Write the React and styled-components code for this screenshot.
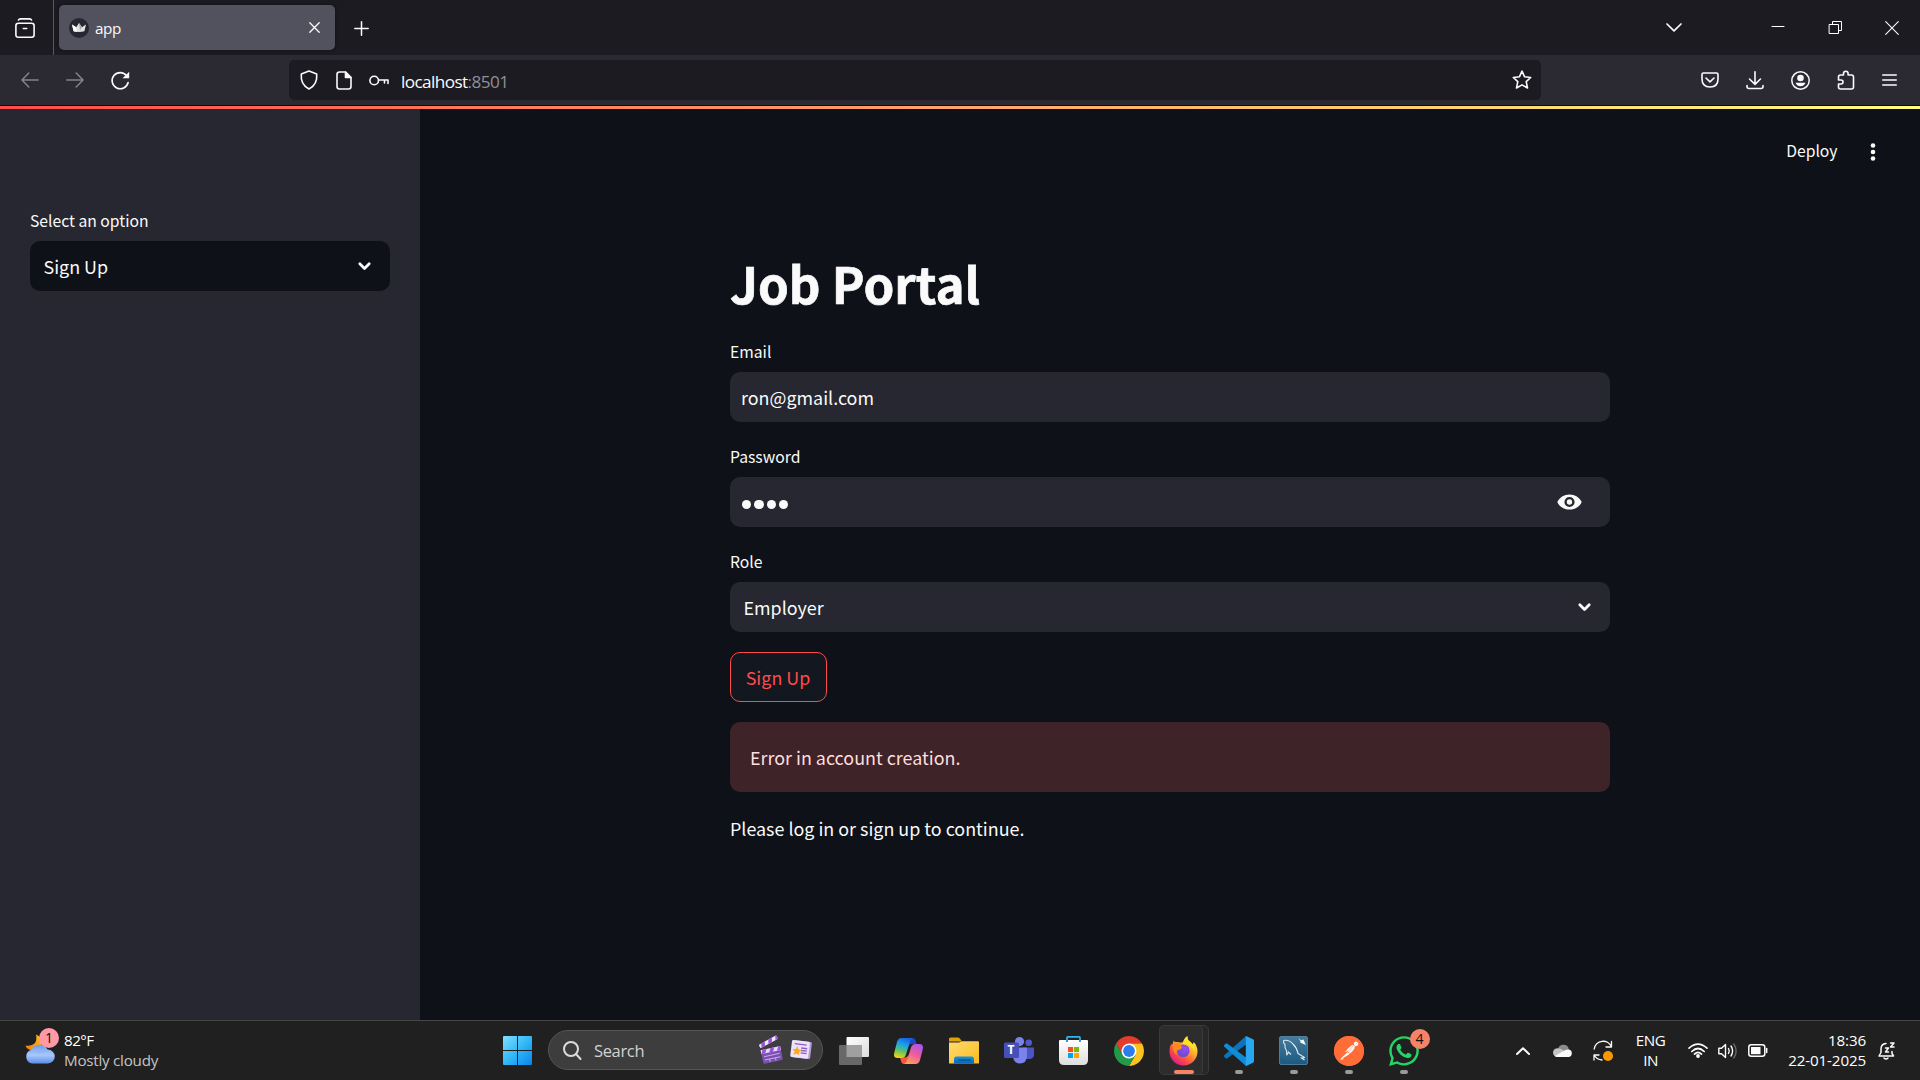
import React from "react";
import styled, { createGlobalStyle } from "styled-components";
import { SiPostman } from "react-icons/si";
import { FaWhatsapp } from "react-icons/fa";

const sans = '"Noto Sans CJK SC", "Noto Sans", sans-serif';
const system = '"Open Sans", "Noto Sans", sans-serif';

const GlobalStyle = createGlobalStyle`
  * { box-sizing: border-box; }
  body { margin: 0; background: #0e1117; overflow: hidden; }
  svg { display: block; flex: none; overflow: visible; }
`;

const Screen = styled.div`
  width: 1920px;
  height: 1080px;
  display: flex;
  flex-direction: column;
  overflow: hidden;
  color: #fafafa;
  font-family: ${sans};
`;

/* ---------- browser chrome ---------- */

const TabStrip = styled.div`
  height: 55px;
  flex: none;
  display: flex;
  align-items: flex-start;
  background: #1c1b22;
  font-family: ${system};
`;

const FirefoxView = styled.div`
  width: 54px;
  height: 55px;
  padding: 18px 0 0 15px;
  border-right: 1px solid #5a5960;
`;

const Tab = styled.div`
  width: 276px;
  height: 45px;
  margin: 5px 0 0 5px;
  padding: 0 15px 0 10px;
  display: flex;
  align-items: center;
  border-radius: 5px;
  background: #52525e;
  box-shadow: 0 0 4px rgba(0, 0, 0, 0.4);
`;

const TabTitle = styled.span`
  flex: 1;
  margin-left: 6px;
  padding-top: 1px;
  font-size: 15.3px;
  line-height: 20px;
  letter-spacing: -0.4px;
  color: #fbfbfe;
`;

const NewTab = styled.div`
  padding: 21px 0 0 19px;
`;

const WindowControls = styled.div`
  margin-left: auto;
  height: 55px;
  display: flex;
  align-items: center;
  padding-right: 21px;
`;

const ControlGap = styled.div`
  width: ${(p) => p.$w}px;
  flex: none;
`;

const Toolbar = styled.div`
  height: 50px;
  flex: none;
  display: flex;
  align-items: center;
  background: #2b2a33;
  font-family: ${system};
`;

const NavButtons = styled.div`
  width: 289px;
  padding-left: 21px;
  display: flex;
  align-items: center;
  gap: 27px;
`;

const UrlBar = styled.div`
  width: 1252px;
  height: 40px;
  padding: 0 9px 0 11px;
  display: flex;
  align-items: center;
  border-radius: 5px;
  background: #1c1b22;
`;

const UrlText = styled.div`
  flex: 1;
  margin-left: 12px;
  padding-top: 3px;
  font-size: 17.2px;
  line-height: 24px;
  letter-spacing: -0.6px;
  color: #fbfbfe;
`;

const Port = styled.span`
  color: #8f8f98;
`;

const ToolbarActions = styled.div`
  flex: 1;
  padding-left: 160px;
  display: flex;
  align-items: center;
  gap: 27px;
`;

const Decoration = styled.div`
  height: 4px;
  flex: none;
  border-top: 1px solid #0c0c0d;
  background: linear-gradient(90deg, #ff4b4b, #fffd80) padding-box;
`;

/* ---------- page ---------- */

const Page = styled.div`
  height: 911px;
  flex: none;
  display: flex;
`;

const Sidebar = styled.aside`
  width: 420px;
  padding: 97px 30px 0;
  background: #262730;
`;

const Main = styled.main`
  flex: 1;
  background: #0e1117;
`;

const AppHeader = styled.header`
  height: 85px;
  padding: 0 44.5px 0 0;
  display: flex;
  justify-content: flex-end;
  align-items: center;
`;

const DeployButton = styled.span`
  margin: -2px 32px 0 0;
  font-size: 15.7px;
  line-height: 24px;
`;

const Column = styled.div`
  width: 880px;
  margin: 0 auto;
  padding-top: 56px;
`;

const Title = styled.h1`
  margin: 0;
  height: 87px;
  font-size: 49.3px;
  line-height: 66px;
  font-weight: 700;
  -webkit-text-stroke: 0.7px #fafafa;
`;

const Field = styled.div`
  margin-bottom: 20px;
`;

const Label = styled.div`
  height: 35px;
  font-size: 15.7px;
  line-height: 30px;
`;

const Control = styled.div`
  height: 50px;
  padding: 0 ${(p) => p.$right || 18}px 0 ${(p) => p.$left || 13.5}px;
  display: flex;
  align-items: center;
  justify-content: space-between;
  border-radius: 10px;
  background: ${(p) => (p.$dark ? "#0e1117" : "#262730")};
  font-size: 17.9px;
  line-height: 30px;
`;

const Dots = styled.div`
  display: flex;
  gap: 3px;
  padding: 4.5px 0 0 1.3px;
`;

const Dot = styled.i`
  width: 9.2px;
  height: 9.2px;
  border-radius: 50%;
  background: #fafafa;
`;

const SubmitButton = styled.button`
  display: block;
  width: 97px;
  height: 50px;
  margin: 0 0 20px;
  padding: 0 1px 0 0;
  border: 1px solid #ff4b4b;
  border-radius: 10px;
  background: #131720;
  color: #ff4b4b;
  font: 17.9px/30px ${sans};
`;

const Alert = styled.div`
  height: 70px;
  margin-bottom: 20px;
  padding: 20px;
  border-radius: 10px;
  background: #3e2328;
  color: #ffdede;
  font-size: 17.9px;
  line-height: 30px;
`;

const Note = styled.p`
  margin: 0;
  padding-top: 1px;
  font-size: 17.9px;
  line-height: 30px;
`;

/* ---------- taskbar ---------- */

const Taskbar = styled.footer`
  height: 60px;
  flex: none;
  display: flex;
  border-top: 1px solid #454545;
  background: #202020;
  font-family: ${system};
`;

const Weather = styled.div`
  width: 490px;
  padding: 0 0 0 25px;
  display: flex;
  align-items: center;
`;

const WeatherIcon = styled.div`
  position: relative;
  width: 39px;
  height: 59px;
  padding-top: 13px;
`;

const Badge = styled.span`
  position: absolute;
  top: ${(p) => p.$top}px;
  left: ${(p) => p.$left}px;
  width: 20px;
  height: 20px;
  border-radius: 50%;
  background: ${(p) => p.$color};
  color: #101010;
  font-size: 14px;
  line-height: 20px;
  text-align: center;
`;

const Lines = styled.div`
  padding-bottom: 2px;
  font-size: 15.2px;
  line-height: 20px;
  text-align: ${(p) => p.$align || "left"};
  letter-spacing: ${(p) => p.$ls || -0.5}px;
  white-space: nowrap;
  color: #fff;
`;

const Muted = styled.div`
  color: #c4c4c4;
  letter-spacing: -0.25px;
`;

const Slot = styled.div`
  position: relative;
  width: ${(p) => p.$w || 55}px;
  height: 59px;
  display: flex;
  align-items: center;
  justify-content: center;
`;

const SearchBox = styled.div`
  width: 275px;
  height: 40px;
  margin: 9px 3px 0 3px;
  padding: 0 10px 0 14px;
  display: flex;
  align-items: center;
  border: 1px solid #555;
  border-radius: 20px;
  background: #3d3d3d;
`;

const SearchText = styled.span`
  flex: 1;
  margin-left: 13px;
  padding-top: 1px;
  font-size: 16.5px;
  letter-spacing: -0.35px;
  color: #d2d2d2;
`;

const Running = styled.i`
  position: absolute;
  bottom: 6px;
  left: ${(p) => (p.$active ? 17.5 : 23.5)}px;
  width: ${(p) => (p.$active ? 20 : 8)}px;
  height: 4px;
  border-radius: 2px;
  background: ${(p) => (p.$active ? "#f68368" : "#9a9a9a")};
`;

const ActiveTile = styled.div`
  position: absolute;
  top: 4px;
  left: ${(p) => (p.$back ? 8 : 2.5)}px;
  width: ${(p) => (p.$back ? 44.5 : 44)}px;
  height: 50px;
  border: 1px solid #3a3a3a;
  border-radius: 5px;
  background: ${(p) => (p.$back ? "#272727" : "#2d2d2d")};
`;

const IconLayer = styled.div`
  position: relative;
`;

const Tray = styled.div`
  margin-left: auto;
  padding-right: 25px;
  display: flex;
  align-items: center;
`;

const TrayGap = styled.div`
  width: ${(p) => p.$w}px;
`;

/* ---------- icons ---------- */

const Svg = ({ w = 20, h = w, vb, sw = 1.6, children, fill = "none", stroke = "#fbfbfe" }) => (
  <svg width={w} height={h} viewBox={vb || `0 0 ${w} ${h}`} fill={fill} stroke={stroke} strokeWidth={sw} strokeLinecap="round" strokeLinejoin="round">
    {children}
  </svg>
);

const ChevronDown = () => (
  <Svg w={13} h={9} sw={2.8} stroke="#fafafa"><path d="M1.800 1.800 6.500 6.500 11.200 1.800" /></Svg>
);

const Eye = () => (
  <svg width="25" height="16" viewBox="0 0 25 16">
    <path d="M.3 8C2.4 3.3 7 .4 12.5.4S22.600 3.300 24.700 8C22.600 12.700 18 15.600 12.500 15.600S2.400 12.700.3 8Z" fill="#fafafa" />
    <circle cx="12.500" cy="8" r="3.900" fill="#fafafa" stroke="#262730" strokeWidth="2.400" />
  </svg>
);

const Favicon = () => (
  <svg width="20" height="20" viewBox="0 0 20 20">
    <circle cx="10" cy="10" r="10" fill="#262730" />
    <path d="M3 6.500 7.200 9.200 10 5 12.900 9.200 17 6.500 15.400 13.200Q10 14.800 4.600 13.200Z" fill="#e2e2e2" />
    <path d="M3 6.500 7.200 9.200 7.900 13.900 4.600 13.200Z" fill="#fff" />
    <path d="M10 5 12.900 9.200 11 12.500Z" fill="#aaa" />
  </svg>
);

const WeatherGlyph = () => (
  <svg width="30" height="30" viewBox="0 0 30 30">
    <defs>
      <linearGradient id="moon" x1="1" y1="0" x2="0" y2="1"><stop stopColor="#fbc02d" /><stop offset="1" stopColor="#f57c00" /></linearGradient>
      <linearGradient id="cloud" x1="0" y1="0" x2="0" y2="1"><stop stopColor="#6d9df0" /><stop offset=".55" stopColor="#a9c8fb" /><stop offset="1" stopColor="#5b8de8" /></linearGradient>
    </defs>
    <path d="M11 .5C13 10 7 12.500.5 11.500 2 16 8 18 13 15.500S19 4 11 .5Z" fill="url(#moon)" />
    <path d="M7 29.500A7 7 0 0 1 6.600 15.800 9 9 0 0 1 22.500 15.500 7 7 0 0 1 23 29.500Z" fill="url(#cloud)" />
    <path d="M6 16.500Q11 15 14 20M22.500 16Q18 16.500 16.500 18.500" fill="none" stroke="#8cb4f7" />
  </svg>
);

const WindowsLogo = () => (
  <svg width="29" height="29" viewBox="0 0 29 29">
    <defs><linearGradient id="win" x1="0" y1="0" x2="29" y2="29" gradientUnits="userSpaceOnUse"><stop stopColor="#7fe0ff" /><stop offset=".5" stopColor="#33b8f7" /><stop offset="1" stopColor="#0a84e8" /></linearGradient></defs>
    <path d="M0 1Q0 0 1 0H14V14H0ZM15 0H28Q29 0 29 1V14H15ZM0 15H14V29H1Q0 29 0 28ZM15 15H29V28Q29 29 28 29H15Z" fill="url(#win)" />
  </svg>
);

const Clapper = () => (
  <svg width="26" height="28" viewBox="0 0 26 28">
    <g transform="rotate(-12 13 20)">
      <rect x="3" y="12" width="20" height="14" rx="1.500" fill="#7a4fae" />
      <path d="M3 12H23V16H3Z" fill="#e9d5ff" />
      <path d="M5 12H9L7 16H3ZM13 12H17L15 16H11ZM21 12H23V14L22 16H19Z" fill="#9b51d8" />
      <path d="M5 19H21M5 22.500H21M10 22.500V25.500M16 22.500V25.500" stroke="#c9a8ee" strokeWidth="1" />
    </g>
    <g transform="rotate(-29 2 11)">
      <rect x="1" y="8" width="20" height="4" rx="1" fill="#f1e4ff" />
      <path d="M4 8H8L6 12H2ZM12 8H16L14 12H10ZM20 8H21V12H18Z" fill="#9b51d8" />
    </g>
  </svg>
);

const News = () => (
  <svg width="22" height="20" viewBox="0 0 22 20">
    <g transform="rotate(7 11 10)">
      <rect x="3" y="1" width="18" height="17" rx="1.500" fill="#b79bd8" />
      <rect x="1" y="1" width="18" height="17" rx="1.500" fill="#ece2fa" />
      <path d="M4 4.500H16M11 8H17M11 10.500H17M11 13H17" stroke="#8a5fc0" strokeWidth="1.300" />
      <path d="M7 6.500 8.400 9.600 11.500 10 9.200 12.200 9.800 15.500 7 13.900 4.200 15.500 4.800 12.200 2.500 10 5.600 9.600Z" fill="#ffa726" />
    </g>
  </svg>
);

const TaskView = () => (
  <svg width="30" height="28" viewBox="0 0 30 28">
    <defs><linearGradient id="tv" x1="0" y1="0" x2="1" y2="1"><stop stopColor="#fff" /><stop offset="1" stopColor="#dcdcdc" /></linearGradient></defs>
    <rect x="7.500" width="22.500" height="20" rx="1" fill="url(#tv)" />
    <rect y="8" width="23" height="20" rx="1" fill="#686868" />
    <path d="M7.500 8H23V20H7.500Z" fill="#a0a0a0" />
  </svg>
);

const Copilot = () => (
  <svg width="29" height="26" viewBox="0 0 29 26">
    <defs>
      <linearGradient id="cpa" x1=".6" y1="0" x2=".3" y2="1"><stop stopColor="#1b63e0" /><stop offset=".35" stopColor="#1aa4e8" /><stop offset=".65" stopColor="#5cc26a" /><stop offset="1" stopColor="#f4d50c" /></linearGradient>
      <linearGradient id="cpb" x1=".8" y1="0" x2=".3" y2="1"><stop stopColor="#a855f0" /><stop offset=".5" stopColor="#ee5b9c" /><stop offset="1" stopColor="#ffa05a" /></linearGradient>
    </defs>
    <path d="M14 0H18.500Q21 0 21.800 3L22.500 6H18Q15 6 14 9Z" fill="#1b49c8" />
    <path d="M14.500 26H10Q7.500 26 7 23L6 19.500H10.500Q13.500 19.500 14.500 16Z" fill="#f25a3c" />
    <path d="M7.500 0H19Q16.500 1 15.500 5L12 16.500Q11 20 7.500 20H3Q-1 19.500.3 14.500L3 4Q4 0 7.500 0Z" fill="url(#cpa)" />
    <path d="M21.500 26H10Q12.500 25 13.500 21L17 9.500Q18 6 21.500 6H26Q30 6.500 28.700 11.500L26 22Q25 26 21.500 26Z" fill="url(#cpb)" />
  </svg>
);

const Explorer = () => (
  <svg width="30" height="27" viewBox="0 0 30 27">
    <defs>
      <linearGradient id="fld" x1="0" y1="0" x2="1" y2="1"><stop stopColor="#ffdc70" /><stop offset="1" stopColor="#fbbb1e" /></linearGradient>
      <linearGradient id="fldb" x1="0" y1="0" x2="0" y2="1"><stop stopColor="#1695e0" /><stop offset="1" stopColor="#0866b8" /></linearGradient>
    </defs>
    <path d="M0 2Q0 .5 1.500.5H8.500Q10 .5 11 1.700L13 4.500H0Z" fill="#e0a106" />
    <path d="M0 5.500H10L13 4.300H29Q30 4.300 30 5.500V26Q30 26.500 29.500 26.500H.5Q0 26.500 0 26Z" fill="url(#fld)" />
    <path d="M5 26.500V22Q5 19.500 7.500 19.500H22.500Q25 19.500 25 22V26.500Z" fill="url(#fldb)" />
    <rect x="9" y="22.500" width="13" height="1.200" fill="#064a8c" />
  </svg>
);

const TeamsBox = styled.div`
  position: relative;
  width: 30px;
  height: 27px;
`;

const TeamsT = styled.span`
  position: absolute;
  left: 0;
  top: 5px;
  width: 15px;
  text-align: center;
  font: 700 12px/16px ${system};
  color: #fff;
`;

const Teams = () => (
  <TeamsBox>
    <svg width="30" height="27" viewBox="0 0 30 27">
      <circle cx="24.700" cy="5.800" r="3.300" fill="#5059c9" />
      <path d="M19 10.500H29.500Q30 10.500 30 11.500V18Q29.500 22 25 22H21Z" fill="#4c55c5" />
      <circle cx="15.500" cy="4.600" r="4.600" fill="#7b83eb" />
      <path d="M9 10.500H22Q23 10.500 23 11.500V19Q22.500 26.500 16 26.500T9 19Z" fill="#7b83eb" />
      <rect y="5.500" width="15" height="15.500" rx="1.500" fill="#4750b8" />
    </svg>
    <TeamsT>T</TeamsT>
  </TeamsBox>
);

const Store = () => (
  <svg width="29" height="29" viewBox="0 0 29 29">
    <defs><linearGradient id="st" x1="0" y1="0" x2="0" y2="1"><stop stopColor="#fff" /><stop offset="1" stopColor="#dedede" /></linearGradient></defs>
    <path d="M8 6V1.500Q8 .8 8.700.8H20.300Q21 .8 21 1.500V6" fill="none" stroke="#2fb5ee" strokeWidth="1.700" />
    <path d="M0 5Q0 4 1 4H28Q29 4 29 5V24Q29 29 24 29H5Q0 29 0 24Z" fill="url(#st)" />
    <path d="M8 4V6M21 4V6" stroke="#1686c4" strokeWidth="1.700" />
    <path d="M9 11H14V16H9Z" fill="#f25022" /><path d="M15 11H20V16H15Z" fill="#7fba00" />
    <path d="M9 17H14V22H9Z" fill="#00a4ef" /><path d="M15 17H20V22H15Z" fill="#ffa800" />
  </svg>
);

const Chrome = () => (
  <svg width="30" height="30" viewBox="0 0 30 30">
    <path d="M2.010 7.500A15 15 0 0 1 27.990 7.500H15L8.500 18.750Z" fill="#e33b2e" />
    <path d="M27.990 7.500A15 15 0 0 1 15 30L21.500 18.750 15 7.500Z" fill="#fcc31e" />
    <path d="M15 30A15 15 0 0 1 2.010 7.500L8.500 18.750H21.500Z" fill="#249a49" />
    <circle cx="15" cy="15" r="7.500" fill="#fff" /><circle cx="15" cy="15" r="5.900" fill="#2b7cf0" />
  </svg>
);

const Firefox = () => (
  <svg width="29" height="29" viewBox="0 0 29 29">
    <defs>
      <linearGradient id="ff" x1=".85" y1=".1" x2=".2" y2=".95"><stop stopColor="#fff04a" /><stop offset=".35" stopColor="#ffb02e" /><stop offset=".65" stopColor="#ff5a3c" /><stop offset="1" stopColor="#e31587" /></linearGradient>
      <radialGradient id="ffp" cx=".65" cy=".25" r=".8"><stop stopColor="#a04bf0" /><stop offset="1" stopColor="#5b4fd0" /></radialGradient>
    </defs>
    <path d="M4.500 4.500Q5.500 6.200 7.500 6Q9.500 5.600 12 6.800Q13.500 5.500 14 6.500Q15.500 1.500 18.500.3Q18 3.500 21 5.500Q23 7.300 23.500 9L24.800 6Q28.500 10 28.500 15.500A14 14 0 0 1 .5 15.500Q.4 10.500 2.300 7.800Q2.600 9 3.200 9Z" fill="url(#ff)" />
    <path d="M14 6.500Q15.500 1.500 18.500.3Q18 3.500 21 5.500Q26 9.500 25.500 15Q23 9.500 14 8Z" fill="#ffe226" />
    <circle cx="14.300" cy="14.800" r="6.300" fill="url(#ffp)" />
    <path d="M3.500 8.500Q8 6 12.500 8.500 11.500 10.500 13 11.300 13 12.800 10.800 13.600 9.300 14.500 8 14.200 7 17 8.500 19 4 18 3.500 8.500Z" fill="#ff8a1e" />
  </svg>
);

const VSCode = () => (
  <svg width="30" height="30" viewBox="0 0 30 30">
    <path d="M0 19.500 22 0V8.500L3.500 22.300Q2.500 23 1.600 22.200L.3 21Q-.5 20.300 0 19.500Z" fill="#0b73bb" />
    <path d="M0 10.500 22 30V21.500L3.500 7.700Q2.500 7 1.600 7.800L.3 9Q-.5 9.700 0 10.500Z" fill="#128bd6" />
    <path d="M22 0 29 3.200Q30 3.700 30 5V25Q30 26.300 29 26.800L22 30Q21.400 29.800 21.800 28.500V1.500Q21.400.2 22 0Z" fill="#28a8f0" />
  </svg>
);

const MySql = () => (
  <svg width="29" height="29" viewBox="0 0 29 29">
    <defs><linearGradient id="my" x1="0" y1="0" x2="0" y2="1"><stop stopColor="#457b9d" /><stop offset="1" stopColor="#1d5a80" /></linearGradient></defs>
    <rect x=".5" y=".5" width="28" height="28" rx="1.500" fill="url(#my)" stroke="#5f95b8" strokeWidth=".7" />
    <path d="M4.500 4.500Q4 7 6 8.500Q5.500 12 7.500 14.500L7.800 19Q9 18.500 9.300 15.800L12 18.500M4.500 4.500Q10 3.500 14 8 18 12 19 17.500L25.500 21.500Q24 22.500 22 21.800L25.500 24" fill="none" stroke="#dceaf3" strokeWidth="1.100" strokeLinejoin="round" />
    <path d="M19.500 2 22 4.200 24.500 3.500 25.500 6 27 9 23.500 7.500 21.500 6.800 21.500 5.500Z" fill="#f3f8fb" />
  </svg>
);

const PostmanDisc = styled.div`
  width: 30px;
  height: 30px;
  border-radius: 50%;
  background: radial-gradient(circle, #fff 60%, #ff6c37 62%);
`;

const Star = () => (
  <Svg w={20}><path d="M10 1.200 12.600 6.800 18.700 7.500 14.200 11.700 15.500 18 10 14.900 4.500 18 5.800 11.700 1.300 7.500 7.400 6.800Z" /></Svg>
);

export default function App() {
  return (
    <Screen>
      <GlobalStyle />
      <TabStrip>
        <FirefoxView>
          <Svg w={20} h={21}>
            <path d="M3.500 2Q4 .9 5.500.9H14.500Q16 .9 16.500 2" />
            <rect x=".9" y="5.300" width="18.200" height="14" rx="2.500" />
            <path d="M8.300 10.500H11.700" />
          </Svg>
        </FirefoxView>
        <Tab>
          <Favicon />
          <TabTitle>app</TabTitle>
          <Svg w={11} sw={1.300}><path d="M.8.8 10.200 10.200M10.200.8.8 10.200" /></Svg>
        </Tab>
        <NewTab><Svg w={15} sw={1.500}><path d="M7.500.8V14.200M.8 7.500H14.200" /></Svg></NewTab>
        <WindowControls>
          <Svg w={16} h={9} sw={1.700}><path d="M1 1 8 7.800 15 1" /></Svg>
          <ControlGap $w={90} />
          <Svg w={12} h={3} sw={1}><path d="M0 .5H12" stroke="#fff" /></Svg>
          <ControlGap $w={45} />
          <Svg w={13} sw={1}><path d="M.5 3.500H9.500V12.500H.5ZM3.500 3.500V.5H12.500V9.500H9.500" stroke="#fff" strokeLinejoin="miter" /></Svg>
          <ControlGap $w={43} />
          <Svg w={14} sw={1.100}><path d="M.7.7 13.300 13.300M13.300.7.7 13.300" /></Svg>
        </WindowControls>
      </TabStrip>

      <Toolbar>
        <NavButtons>
          <Svg w={18} h={16} stroke="#84838b" sw={1.500}><path d="M17.200 8H1M7.800 1 1 8 7.800 15" /></Svg>
          <Svg w={18} h={16} stroke="#84838b" sw={1.500}><path d="M.8 8H17M10.200 1 17 8 10.200 15" /></Svg>
          <Svg w={19} h={19} sw={1.600}>
            <path d="M15.600 4.700A8.100 8.100 0 1 0 17.100 11.500" />
            <path d="M18.200.8V7.200H11.500Z" fill="#fbfbfe" stroke="none" />
          </Svg>
        </NavButtons>
        <UrlBar>
          <Svg w={18} h={20}><path d="M9 1 16.700 4Q17.700 14.500 9 19 .3 14.500 1.300 4Z" /></Svg>
          <ControlGap $w={18} />
          <Svg w={16} h={19}>
            <path d="M9.500 1H3.500Q1 1 1 3.500V15.500Q1 18 3.500 18H12.500Q15 18 15 15.500V6.500Z" />
            <path d="M9.500 1V6.500H15Z" fill="#fbfbfe" />
          </Svg>
          <ControlGap $w={17} />
          <Svg w={20} h={11}><circle cx="5.200" cy="5.500" r="4.300" /><path d="M9.600 5H19V8.500M15.500 5V8" /></Svg>
          <UrlText>localhost<Port>:8501</Port></UrlText>
          <Star />
        </UrlBar>
        <ToolbarActions>
          <Svg w={18} h={16}><path d="M2.500 1H15.500Q17 1 17 2.500V7Q17 15 9 15T1 7V2.500Q1 1 2.500 1ZM5 6 9 9.800 13 6" /></Svg>
          <Svg w={18} h={19}><path d="M9 .8V13M3.500 8 9 13.300 14.500 8M1 14.500V15.500Q1 17.500 3 17.500H15Q17 17.500 17 15.500V14.500" /></Svg>
          <Svg w={19} sw={1.500}><circle cx="9.500" cy="9.500" r="8.700" /><circle cx="9.500" cy="7" r="3.300" fill="#fbfbfe" stroke="none" /><path d="M4.500 11.800H14.500Q13 15.300 9.500 15.300T4.500 11.800Z" fill="#fbfbfe" stroke="none" /></Svg>
          <Svg w={18} h={20}><path d="M6.500 5V3.500A2.300 2.300 0 0 1 11.100 3.500V5H14.500Q16.500 5 16.500 7V17Q16.500 19 14.500 19H3.500Q1.500 19 1.500 17V14H4A2 2 0 0 0 4 10H1.500V7Q1.500 5 3.500 5Z" /></Svg>
          <Svg w={15} h={12} sw={1.400}><path d="M.7 1H14.300M.7 6H14.300M.7 11H14.300" /></Svg>
        </ToolbarActions>
      </Toolbar>
      <Decoration />

      <Page>
        <Sidebar>
          <Label>Select an option</Label>
          <Control $dark $right={19.5}>
            Sign Up
            <ChevronDown />
          </Control>
        </Sidebar>
        <Main>
          <AppHeader>
            <DeployButton>Deploy</DeployButton>
            <svg width="6" height="18" viewBox="0 0 6 18" fill="#fafafa"><circle cx="3" cy="2.500" r="2.300" /><circle cx="3" cy="9" r="2.300" /><circle cx="3" cy="15.500" r="2.300" /></svg>
          </AppHeader>
          <Column>
            <Title>Job Portal</Title>
            <Field>
              <Label>Email</Label>
              <Control $left={11}>ron@gmail.com</Control>
            </Field>
            <Field>
              <Label>Password</Label>
              <Control $left={11} $right={28}>
                <Dots><Dot /><Dot /><Dot /><Dot /></Dots>
                <Eye />
              </Control>
            </Field>
            <Field>
              <Label>Role</Label>
              <Control $right={19.5}>
                Employer
                <ChevronDown />
              </Control>
            </Field>
            <SubmitButton type="button">Sign Up</SubmitButton>
            <Alert>Error in account creation.</Alert>
            <Note>Please log in or sign up to continue.</Note>
          </Column>
        </Main>
      </Page>

      <Taskbar>
        <Weather>
          <WeatherIcon>
            <WeatherGlyph />
            <Badge $top={7} $left={14} $color="#ff99a4">1</Badge>
          </WeatherIcon>
          <Lines>82°F<Muted>Mostly cloudy</Muted></Lines>
        </Weather>
        <Slot><WindowsLogo /></Slot>
        <SearchBox>
          <Svg w={18} h={19} sw={2} stroke="#dcdcdc"><circle cx="8" cy="8" r="7" /><path d="M13 13 17.500 18" /></Svg>
          <SearchText>Search</SearchText>
          <Clapper />
          <ControlGap $w={5} />
          <News />
        </SearchBox>
        <Slot><TaskView /></Slot>
        <Slot><Copilot /></Slot>
        <Slot><Explorer /></Slot>
        <Slot><Teams /></Slot>
        <Slot><Store /></Slot>
        <Slot><Chrome /></Slot>
        <Slot><ActiveTile $back /><ActiveTile /><IconLayer><Firefox /></IconLayer><Running $active /></Slot>
        <Slot><VSCode /><Running /></Slot>
        <Slot><MySql /><Running /></Slot>
        <Slot><PostmanDisc><SiPostman size={30} color="#ff6c37" /></PostmanDisc><Running /></Slot>
        <Slot><FaWhatsapp size={34} color="#25d366" /><Badge $top={8} $left={33.5} $color="#f68368">4</Badge><Running /></Slot>
        <Tray>
          <Svg w={14} h={8} sw={2}><path d="M1 7 7 1.200 13 7" /></Svg>
          <TrayGap $w={23} />
          <svg width="20" height="13" viewBox="0 0 20 13">
            <path d="M5 5.500A5.500 5.500 0 0 1 15.500 4Q17 8 10 9Z" fill="#8c8c8c" />
            <path d="M4.500 13A4.400 4.400 0 1 1 6 4.500Q9 4.500 11 7L8 13Z" fill="#c4c4c4" />
            <path d="M2 12 10.500 7Q13 5 16 5.500A3.900 3.900 0 0 1 16 13H4.500Q3 13 2 12Z" fill="#fafafa" />
          </svg>
          <TrayGap $w={20} />
          <Svg w={20} h={20} sw={1.300}>
            <path d="M1.200 8A9 9 0 0 1 18.500 6M18.500.5V6H13M1 19V14H6M1 14Q3.500 18.500 9 19" />
            <circle cx="15" cy="15" r="5" fill="#ff9800" stroke="none" />
          </Svg>
          <TrayGap $w={23} />
          <Lines $align="center" $ls={-0.5}>ENG<br />IN</Lines>
          <TrayGap $w={23} />
          <Svg w={20} h={15} sw={1.700}>
            <path d="M1 5.200Q10-2.800 19 5.200M3.800 8.500Q10 2.500 16.200 8.500M6.500 11.200Q10 7.500 13.500 11.200" />
            <circle cx="10" cy="13" r="1.900" fill="#fff" stroke="none" />
          </Svg>
          <TrayGap $w={10} />
          <Svg w={19} h={16} sw={1.400}>
            <path d="M.8 5.200H3.500L7.500 1.500V14.500L3.500 10.800H.8ZM10.500 5.500Q12 8 10.500 10.500M13 3Q16.200 8 13 13" />
            <path d="M15.800 1Q20.500 8 15.800 15" stroke="#666" />
          </Svg>
          <TrayGap $w={11} />
          <Svg w={20} h={13} sw={1.500}>
            <rect x=".8" y=".8" width="16" height="11.500" rx="2.500" />
            <rect x="3" y="3" width="9.500" height="7.200" fill="#fff" stroke="none" />
            <path d="M18.700 4.500V8.500" />
          </Svg>
          <TrayGap $w={20} />
          <Lines $align="right" $ls={-0.15}>18:36<br />22-01-2025</Lines>
          <TrayGap $w={12} />
          <Svg w={17} h={18} sw={1.500}>
            <path d="M8 1.500Q3 2 3 7V10.500L1 14H15.500L14 11.500V9.500M6 16Q8 18 10 16M7.500 6H10.500L7.500 10H10.500M12.500 1H16L12.500 5H16" />
          </Svg>
        </Tray>
      </Taskbar>
    </Screen>
  );
}
